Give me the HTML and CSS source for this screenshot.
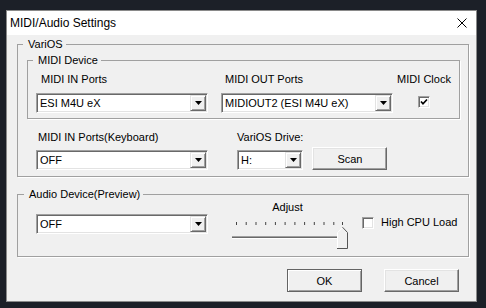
FILE: index.html
```html
<!DOCTYPE html>
<html lang="en">
<head>
  <meta charset="UTF-8" />
  <title>MIDI/Audio Settings</title>
  <link rel="stylesheet" href="styles.css">
</head>
<body>
  <div class="window">
    <div class="titlebar">
      <span class="title">MIDI/Audio Settings</span>
      <svg class="close" width="10" height="10" viewBox="0 0 10 10">
        <path d="M0.5 0.5 L9.5 9.5 M9.5 0.5 L0.5 9.5" stroke="#000" stroke-width="1" />
      </svg>
    </div>

    <div class="client">
      <fieldset class="group varios">
        <legend>VariOS</legend>

        <fieldset class="group device">
          <legend>MIDI Device</legend>
          <div class="row">
            <div class="field">
              <label class="lbl lbl-in">MIDI IN Ports</label>
              <div class="combo combo-wide">
                <span class="combo-text">ESI M4U eX</span>
                <span class="combo-btn"><svg width="7" height="4"><polygon points="0,0 7,0 3.5,4" fill="#000" /></svg></span>
              </div>
            </div>
            <div class="field">
              <label class="lbl lbl-out">MIDI OUT Ports</label>
              <div class="combo combo-wide">
                <span class="combo-text">MIDIOUT2 (ESI M4U eX)</span>
                <span class="combo-btn"><svg width="7" height="4"><polygon points="0,0 7,0 3.5,4" fill="#000" /></svg></span>
              </div>
            </div>
            <div class="clock">
              <label class="lbl">MIDI Clock</label>
              <span class="check checked">
                <svg width="8" height="8" viewBox="0 0 8 8"><polyline points="1,3.5 3,5.8 7,1.5" fill="none" stroke="#000" stroke-width="1.7" /></svg>
              </span>
            </div>
          </div>
        </fieldset>

        <div class="row row-drive">
          <div class="field">
            <label class="lbl lbl-kb">MIDI IN Ports(Keyboard)</label>
            <div class="combo combo-wide">
              <span class="combo-text">OFF</span>
              <span class="combo-btn"><svg width="7" height="4"><polygon points="0,0 7,0 3.5,4" fill="#000" /></svg></span>
            </div>
          </div>
          <div class="field field-drive">
            <label class="lbl">VariOS Drive:</label>
            <div class="combo combo-drive">
              <span class="combo-text">H:</span>
              <span class="combo-btn"><svg width="7" height="4"><polygon points="0,0 7,0 3.5,4" fill="#000" /></svg></span>
            </div>
          </div>
          <button class="btn btn-scan">Scan</button>
        </div>
      </fieldset>

      <fieldset class="group audio">
        <legend>Audio Device(Preview)</legend>
        <div class="row row-audio">
          <div class="combo combo-wide combo-audio">
            <span class="combo-text">OFF</span>
            <span class="combo-btn"><svg width="7" height="4"><polygon points="0,0 7,0 3.5,4" fill="#000" /></svg></span>
          </div>

          <div class="slider">
            <div class="slider-label">Adjust</div>
            <svg width="120" height="36" viewBox="0 0 120 36">
              <g fill="#444">
                <rect x="6" y="8" width="1" height="3" />
                <rect x="15.7" y="8" width="1" height="3" />
                <rect x="25.5" y="8" width="1" height="3" />
                <rect x="35.2" y="8" width="1" height="3" />
                <rect x="44.9" y="8" width="1" height="3" />
                <rect x="54.6" y="8" width="1" height="3" />
                <rect x="64.4" y="8" width="1" height="3" />
                <rect x="74.1" y="8" width="1" height="3" />
                <rect x="83.8" y="8" width="1" height="3" />
                <rect x="93.5" y="8" width="1" height="3" />
                <rect x="103.3" y="8" width="1" height="3" />
                <rect x="112" y="8" width="1" height="3" />
              </g>
              <!-- track -->
              <rect x="2" y="22" width="106" height="1" fill="#a0a0a0" />
              <rect x="2" y="23" width="106" height="1" fill="#696969" />
              <rect x="2" y="24" width="106" height="1" fill="#fff" />
              <!-- thumb -->
              <polygon points="112.5,13 118,18.5 118,35 107,35 107,18.5" fill="#f0f0f0" />
              <polyline points="107.5,34.5 107.5,18.7 112.5,13.7" fill="none" stroke="#fff" stroke-width="1" />
              <polyline points="112.5,13.2 117.5,18.5 117.5,34.5 107,34.5" fill="none" stroke="#555" stroke-width="1" />
            </svg>
          </div>

          <div class="cpu">
            <span class="check"></span>
            <label class="lbl cpu-label">High CPU Load</label>
          </div>
        </div>
      </fieldset>

      <div class="buttons">
        <button class="btn btn-default">OK</button>
        <button class="btn">Cancel</button>
      </div>
    </div>
  </div>
</body>
</html>
```

FILE: styles.css
```css
html, body {
  margin: 0;
}

body {
  background: #1c2028;
  padding: 10px 0 0 6px;
  font-family: "Liberation Sans", Arial, sans-serif;
  font-size: 11px;
  color: #000;
}

.window {
  width: 471px;
  height: 292px;
  box-sizing: border-box;
  border: 1px solid #8a8a8a;
  background: #f0f0f0;
}

.titlebar {
  height: 24px;
  background: #fff;
  display: flex;
  align-items: center;
  justify-content: space-between;
  padding: 0 9px 0 3px;
}

.title {
  font-size: 12px;
}

.client {
  padding: 3px 7px 0 10px;
}

/* group boxes */
.group {
  margin: 0;
  border: 1px solid #a0a0a0;
  box-shadow: 1px 1px 0 #fff;
  min-width: 0;
}

.group legend {
  line-height: 13px;
  padding: 0 3px 0 5px;
}

.varios {
  padding: 3px 8px 6px 9px;
}

.varios > legend {
  margin-left: -4px;
}

.device {
  padding: 6px 8px 5px 8px;
}

.device > legend {
  margin-left: -3px;
}

.audio {
  margin-top: 11px;
  padding: 0 8px 6px 18px;
}

.audio > legend {
  margin-left: -12px;
}

.row {
  display: flex;
  align-items: flex-end;
}

.field {
  display: flex;
  flex-direction: column;
}

.lbl {
  line-height: 13px;
  white-space: nowrap;
}

.lbl-in {
  padding-left: 5px;
  margin-bottom: 7px;
}

.lbl-out {
  padding-left: 4px;
  margin-bottom: 7px;
}

.field + .field {
  margin-left: 13px;
}

.clock {
  margin-left: 5px;
  width: 52px;
  display: flex;
  flex-direction: column;
  align-items: center;
  align-self: flex-start;
}

.clock .check {
  margin-top: 10px;
}

.row-drive {
  margin-top: 12px;
  padding-left: 9px;
}

.row-drive .lbl {
  margin-bottom: 6px;
}

.lbl-kb {
  padding-left: 2px;
}

.row-drive .field-drive {
  margin-left: 29px;
}

/* combo boxes */
.combo {
  display: flex;
  height: 20px;
  box-sizing: border-box;
  background: #fff;
  border: 1px solid;
  border-color: #a0a0a0 #fff #fff #a0a0a0;
  box-shadow: inset 1px 1px 0 #696969, inset -1px -1px 0 #e3e3e3;
}

.combo-wide {
  width: 172px;
}

.combo-drive {
  width: 66px;
}

.combo-text {
  flex: 1;
  padding-left: 3px;
  line-height: 18px;
  white-space: nowrap;
  overflow: hidden;
}

.combo-btn {
  width: 16px;
  height: 16px;
  margin: 1px;
  box-sizing: border-box;
  background: #f0f0f0;
  border: 1px solid;
  border-color: #e3e3e3 #696969 #696969 #e3e3e3;
  box-shadow: inset 1px 1px 0 #fff, inset -1px -1px 0 #a0a0a0;
  display: flex;
  align-items: center;
  justify-content: center;
}

/* check boxes */
.check {
  width: 12px;
  height: 12px;
  box-sizing: border-box;
  background: #fff;
  border: 1px solid;
  border-color: #a0a0a0 #fff #fff #a0a0a0;
  box-shadow: inset 1px 1px 0 #696969, inset -1px -1px 0 #e3e3e3;
  display: flex;
  align-items: center;
  justify-content: center;
}

/* buttons */
.btn {
  width: 75px;
  height: 23px;
  padding: 0;
  font-family: inherit;
  font-size: 11px;
  color: #000;
  background: #f0f0f0;
  border: 1px solid;
  border-color: #fff #696969 #696969 #fff;
  box-shadow: inset -1px -1px 0 #a0a0a0, inset 1px 1px 0 #e3e3e3;
}

.btn-default {
  border-color: #646464;
  box-shadow: inset 1px 1px 0 #fff, inset -1px -1px 0 #a0a0a0;
}

.btn-scan {
  margin-left: 9px;
}

/* audio row */
.row-audio {
  align-items: flex-start;
}

.combo-audio {
  margin-top: 13px;
}

.slider {
  margin-left: 22px;
  width: 120px;
}

.slider-label {
  line-height: 13px;
  text-align: center;
  padding-right: 5px;
}

.slider svg {
  display: block;
}

.cpu {
  margin-left: 12px;
  margin-top: 15px;
  display: flex;
  align-items: center;
}

.cpu-label {
  margin-left: 7px;
}

.buttons {
  display: flex;
  justify-content: flex-end;
  gap: 22px;
  margin-top: 12px;
  padding-right: 10px;
}
```
